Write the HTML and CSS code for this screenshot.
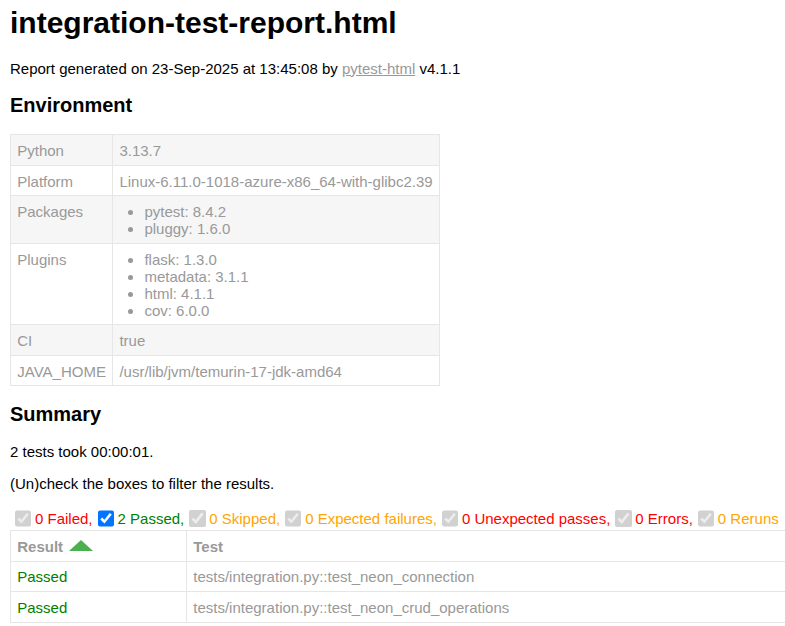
FILE: index.html
```html
<!DOCTYPE html>
<html lang="en">
<head>
<meta charset="utf-8">
<title>integration-test-report.html</title>
<link rel="stylesheet" href="styles.css">
</head>
<body>
<h1 class="title">integration-test-report.html</h1>
<p class="meta">Report generated on 23-Sep-2025 at 13:45:08 by <a class="link" href="#">pytest-html</a> v4.1.1</p>
<h2 class="section-title env-title">Environment</h2>
<table class="env">
<tbody>
<tr><td>Python</td><td>3.13.7</td></tr>
<tr><td>Platform</td><td>Linux-6.11.0-1018-azure-x86_64-with-glibc2.39</td></tr>
<tr><td>Packages</td><td><ul class="env-list"><li>pytest: 8.4.2</li><li>pluggy: 1.6.0</li></ul></td></tr>
<tr><td>Plugins</td><td><ul class="env-list"><li>flask: 1.3.0</li><li>metadata: 3.1.1</li><li>html: 4.1.1</li><li>cov: 6.0.0</li></ul></td></tr>
<tr><td>CI</td><td>true</td></tr>
<tr><td>JAVA_HOME</td><td>/usr/lib/jvm/temurin-17-jdk-amd64</td></tr>
</tbody>
</table>
<h2 class="section-title summary-title">Summary</h2>
<p class="run-count">2 tests took 00:00:01.</p>
<p class="filter-hint">(Un)check the boxes to filter the results.</p>
<div class="filters">
<input type="checkbox" class="filter-box" checked disabled><span class="failed">0 Failed,</span>
<input type="checkbox" class="filter-box" checked><span class="passed">2 Passed,</span>
<input type="checkbox" class="filter-box" checked disabled><span class="skipped">0 Skipped,</span>
<input type="checkbox" class="filter-box" checked disabled><span class="xfailed">0 Expected failures,</span>
<input type="checkbox" class="filter-box" checked disabled><span class="xpassed">0 Unexpected passes,</span>
<input type="checkbox" class="filter-box" checked disabled><span class="error">0 Errors,</span>
<input type="checkbox" class="filter-box" checked disabled><span class="rerun">0 Reruns</span>
</div>
<table class="results">
<colgroup><col class="col-result"><col class="col-test"></colgroup>
<thead>
<tr><th class="sortable">Result<span class="sort-arrow"></span></th><th>Test</th></tr>
</thead>
<tbody>
<tr><td class="passed">Passed</td><td>tests/integration.py::test_neon_connection</td></tr>
<tr><td class="passed">Passed</td><td>tests/integration.py::test_neon_crud_operations</td></tr>
</tbody>
</table>
</body>
</html>
```
FILE: styles.css
```css
html {
  overflow: hidden;
}

body {
  margin: 0 10px 10px;
  min-width: 980px;
  font-family: "Liberation Sans", Arial, Helvetica, sans-serif;
  font-size: 15px;
  color: #999;
}

.title {
  font-size: 30px;
  color: #000;
  margin: 5.85px 0 20.1px;
}

p {
  color: #000;
  margin: 15px 0;
}

.link {
  color: #999;
}

.section-title {
  font-size: 20px;
  color: #000;
  margin: 16.6px 0;
}

.env-title {
  margin-top: 17.4px;
  margin-bottom: 16.8px;
}

.summary-title {
  margin-top: 16.8px;
}

table {
  border-collapse: collapse;
}

.env td {
  padding: 7px 6.25px 5.5px;
  border: 1px solid #e6e6e6;
  vertical-align: top;
  line-height: 17px;
}

.env tr:nth-child(odd) {
  background-color: #f6f6f6;
}

.env-list {
  margin: 0;
  padding: 0 25px;
}

.filters {
  display: flex;
  align-items: center;
}

.filter-box {
  width: 16.25px;
  height: 16.25px;
  margin: 3.75px 3.75px 3.75px 5px;
}

.failed,
.xpassed,
.error {
  color: red;
}

.passed {
  color: green;
}

.skipped,
.xfailed,
.rerun {
  color: orange;
}

.results {
  width: 100%;
  border: 1px solid #e6e6e6;
  color: #999;
}

.results th,
.results td {
  padding: 6.25px;
  border: 1px solid #e6e6e6;
  text-align: left;
}

.results th {
  font-weight: bold;
}

.results td.passed {
  color: green;
}

.col-result {
  width: 176px;
}

.sortable {
  cursor: pointer;
}

.sort-arrow {
  display: inline-block;
  width: 0;
  height: 0;
  margin-left: 6px;
  vertical-align: 1px;
  border-left: 12.5px solid transparent;
  border-right: 12.5px solid transparent;
  border-bottom: 11px solid #4caf50;
}
```
